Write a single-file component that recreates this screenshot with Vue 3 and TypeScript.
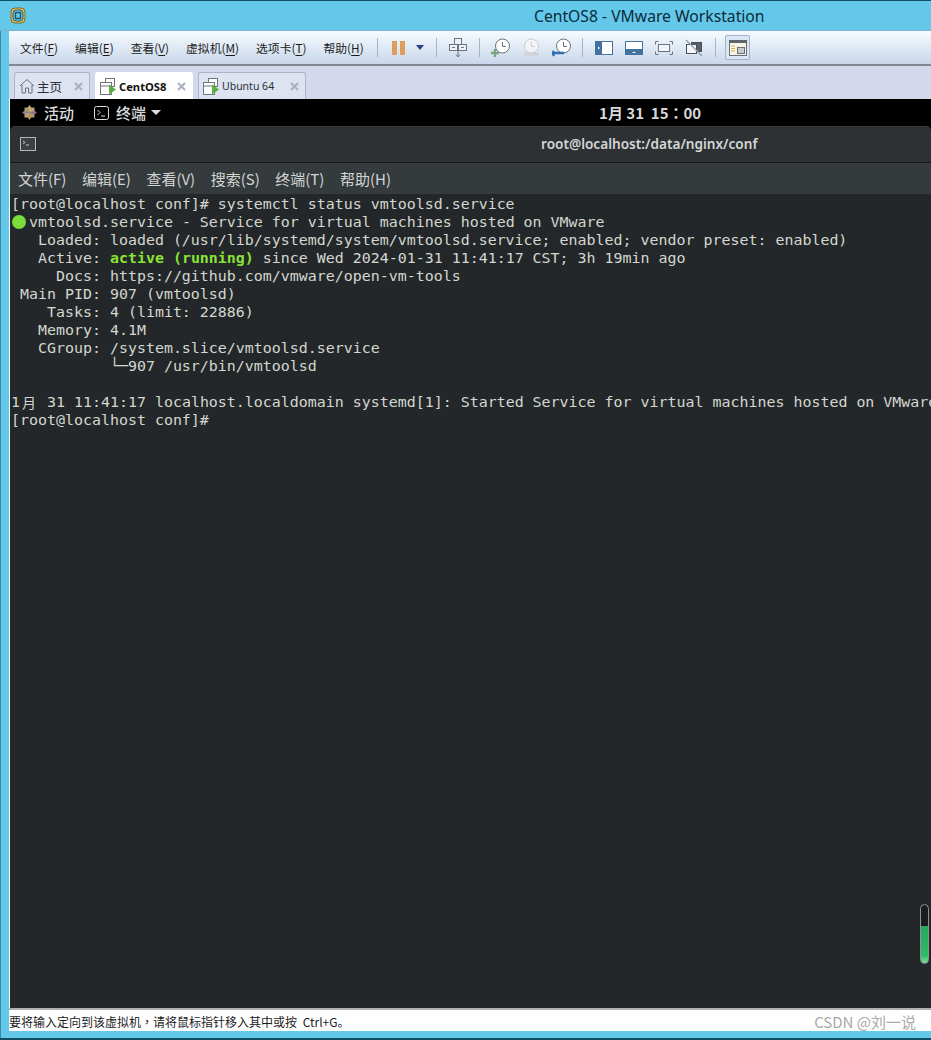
<script setup lang="ts">
interface Menu { label: string; key: string }
const vmMenus: Menu[] = [
  { label: '文件(', key: 'F' },
  { label: '编辑(', key: 'E' },
  { label: '查看(', key: 'V' },
  { label: '虚拟机(', key: 'M' },
  { label: '选项卡(', key: 'T' },
  { label: '帮助(', key: 'H' },
]
const termMenus: string[] = ['文件(F)', '编辑(E)', '查看(V)', '搜索(S)', '终端(T)', '帮助(H)']
</script>

<template>
  <div class="frame">
    <header class="titlebar">
      <svg class="app-icon" width="16" height="17" viewBox="0 0 16 17">
        <rect x="1" y="1" width="14" height="15" rx="4" fill="#f1c24a" stroke="#7d6a2c" />
        <rect x="3" y="3" width="10" height="11" rx="3" fill="#64c8e8" stroke="#2a5d6e" />
        <rect x="5.500" y="5.500" width="5" height="6" fill="none" stroke="#24505e" stroke-width="1.400" />
      </svg>
      <span class="app-title">CentOS8 - VMware Workstation</span>
    </header>

    <div class="body">
      <nav class="toolbar">
        <div class="menus">
          <span v-for="m in vmMenus" :key="m.key" class="vm-menu">{{ m.label }}<u>{{ m.key }}</u>)</span>
        </div>
        <i class="sep sep-first"></i>
        <svg class="tool pause" width="13" height="14" viewBox="0 0 13 14"><rect width="5" height="14" fill="#dd9d5c" /><rect x="8" width="5" height="14" fill="#dd9d5c" /></svg>
        <svg class="tool caret" width="8" height="5" viewBox="0 0 8 5"><path d="M0 0h8L4 5z" fill="#2b3f8a" /></svg>
        <i class="sep sep-a"></i>
        <svg class="tool net" width="18" height="20" viewBox="0 0 18 20" fill="#eef1f6" stroke="#6d7480">
          <rect x="5.500" y=".5" width="7" height="6" /><rect x=".5" y="6.500" width="8" height="6" /><rect x="9.500" y="6.500" width="8" height="6" />
          <path d="M3 9.500h3M12 9.500h3M9 13v5M7 16.500l2 2.500 2-2.500" fill="none" />
        </svg>
        <i class="sep sep-b"></i>
        <svg class="tool clock" width="20" height="20" viewBox="0 0 20 20">
          <circle cx="11.500" cy="8" r="7" fill="#fff" stroke="#69707a" />
          <path d="M11.500 4v4.500h3.500" fill="none" stroke="#69707a" />
          <path d="M4 11v8M0 15h8" stroke="#7aa57e" stroke-width="2.400" />
        </svg>
        <svg class="tool clock dim" width="20" height="20" viewBox="0 0 20 20">
          <circle cx="10.500" cy="8" r="7" fill="#f1f3f7" stroke="#c9cdd3" />
          <path d="M10.500 4v4.500h3.500" fill="none" stroke="#c9cdd3" />
          <path d="M3 16h15" stroke="#cfd2d6" stroke-width="3" />
        </svg>
        <svg class="tool clock" width="20" height="20" viewBox="0 0 20 20">
          <circle cx="11.500" cy="8" r="7" fill="#fff" stroke="#69707a" />
          <path d="M11.500 4v4.500h3.500" fill="none" stroke="#69707a" />
          <path d="M1 15h11M2 13l-1.500 2L2 18" fill="none" stroke="#2f6fb0" stroke-width="2.400" />
        </svg>
        <i class="sep sep-c"></i>
        <svg class="tool view" width="18" height="14" viewBox="0 0 18 14"><rect width="18" height="14" fill="#44729f" /><rect x="7" y="1" width="10" height="12" fill="#fff" /><path d="M3 5.500 5 7 3 8.500z" fill="#fff" /></svg>
        <svg class="tool view" width="18" height="14" viewBox="0 0 18 14"><rect width="18" height="14" fill="#44729f" /><rect x="1" y="1" width="16" height="7" fill="#fff" /><path d="M7 12l2-1.500 2 1.500z" fill="#fff" /></svg>
        <svg class="tool view" width="18" height="14" viewBox="0 0 18 14" fill="none" stroke="#6d7480">
          <rect x="3.500" y="3.500" width="11" height="7" fill="#f4f6fa" />
          <path d="M.5 3.500v-3h3M14.500.5h3v3M.5 10.500v3h3M14.500 13.500h3v-3" />
        </svg>
        <svg class="tool view" width="18" height="18" viewBox="0 0 18 18" fill="none">
          <rect x="6.500" y="3.500" width="10" height="9" fill="#59606a" stroke="#4a4f57" />
          <rect x="1.500" y="5.500" width="10" height="9" fill="#f4f6fa" stroke="#4a4f57" />
          <path d="M1 1l16 16" stroke="#9aa0a8" stroke-width="1.500" />
        </svg>
        <i class="sep sep-d"></i>
        <button class="lib-btn" type="button" aria-label="库">
          <svg width="18" height="16" viewBox="0 0 18 16">
            <rect x=".5" y=".5" width="17" height="15" fill="#f7f3e6" stroke="#6b7076" />
            <rect x="0" y="0" width="18" height="3" fill="#5f6468" />
            <path d="M2 6h4M2 8.500h4M2 11h4" stroke="#d9b657" />
            <rect x="8.500" y="7.500" width="7" height="6" fill="#c6ccd2" stroke="#6b7076" />
          </svg>
        </button>
      </nav>

      <div class="tabs">
        <div class="tab tab-home">
          <svg width="16" height="16" viewBox="0 0 16 16" fill="none" stroke="#6a7078"><path d="M1 8l7-6.500L15 8M3 7v8h3.500v-5h3v5H13V7" /></svg>
          <span class="tab-label zh">主页</span>
          <svg class="x" width="9" height="9" viewBox="0 0 9 9"><path d="M1 1l7 7M8 1l-7 7" /></svg>
        </div>
        <div class="tab tab-active">
          <svg width="17" height="17" viewBox="0 0 17 17" fill="#fff" stroke="#6f757c"><rect x="5.500" y=".5" width="9" height="8" /><rect x=".5" y="4.500" width="11" height="12" /><path d="M.5 8h11" /><path d="M9 6.500 16 11.500 9 16.500z" fill="#5eae45" stroke="none" /></svg>
          <span class="tab-label bold">CentOS8</span>
          <svg class="x" width="9" height="9" viewBox="0 0 9 9"><path d="M1 1l7 7M8 1l-7 7" /></svg>
        </div>
        <div class="tab tab-ubuntu">
          <svg width="17" height="17" viewBox="0 0 17 17" fill="#fff" stroke="#6f757c"><rect x="5.500" y=".5" width="9" height="8" /><rect x=".5" y="4.500" width="11" height="12" /><path d="M.5 8h11" /><path d="M9 6.500 16 11.500 9 16.500z" fill="#5eae45" stroke="none" /></svg>
          <span class="tab-label">Ubuntu 64</span>
          <svg class="x" width="9" height="9" viewBox="0 0 9 9"><path d="M1 1l7 7M8 1l-7 7" /></svg>
        </div>
      </div>

      <main class="vm">
        <div class="gnome-bar">
          <svg class="gnome-logo" width="15" height="15" viewBox="0 0 15 15">
            <path d="M7.500 0 10 3.500 7.500 7.500 5 3.500z" fill="#c9a86a" />
            <path d="M15 7.500 11.500 10 7.500 7.500 11.500 5z" fill="#8f6f95" />
            <path d="M7.500 15 5 11.500 7.500 7.500 10 11.500z" fill="#b58f5c" />
            <path d="M0 7.500 3.500 5 7.500 7.500 3.500 10z" fill="#9a7aa0" />
            <path d="M2.500 2.500h3.500l1.500 5-5-1.500zM12.500 12.500H9l-1.500-5 5 1.500z" fill="#a89a70" />
            <path d="M12.500 2.500V6l-5 1.500L9 2.500zM2.500 12.500V9l5-1.500L6 12.500z" fill="#bca27a" />
          </svg>
          <span class="gnome-item activities">活动</span>
          <svg class="term-icon" width="15" height="14" viewBox="0 0 15 14" fill="none" stroke="#ddd"><rect x=".5" y=".5" width="14" height="13" rx="2" /><path d="M3.500 4l2.500 2.500L3.500 9M7 10h4" /></svg>
          <span class="gnome-item term-label">终端</span>
          <svg class="term-caret" width="10" height="5" viewBox="0 0 10 5"><path d="M0 0h10L5 5z" fill="#ddd" /></svg>
          <span class="clock-text">1月 31&nbsp; 15<span class="tc">：</span>00</span>
        </div>

        <section class="term-window">
          <div class="term-title">
            <svg class="term-win-icon" width="16" height="14" viewBox="0 0 16 14" fill="none"><rect x=".5" y=".5" width="15" height="13" fill="#3b4042" stroke="#b5b8b9" /><path d="M3 4l2 1.500L3 7M6 8h3" stroke="#c8caca" /></svg>
            <span class="term-path">root@localhost:/data/nginx/conf</span>
          </div>
          <div class="term-menu">
            <span v-for="m in termMenus" :key="m">{{ m }}</span>
          </div>
          <div class="console">
<pre class="lines">[root@localhost conf]# systemctl status vmtoolsd.service
<span class="dot"></span>vmtoolsd.service - Service for virtual machines hosted on VMware
   Loaded: loaded (/usr/lib/systemd/system/vmtoolsd.service; enabled; vendor preset: enabled)
   Active: <b class="ok">active (running)</b> since Wed 2024-01-31 11:41:17 CST; 3h 19min ago
     Docs: https://github.com/vmware/open-vm-tools
 Main PID: 907 (vmtoolsd)
    Tasks: 4 (limit: 22886)
   Memory: 4.1M
   CGroup: /system.slice/vmtoolsd.service
           └─907 /usr/bin/vmtoolsd

1<span class="wide">月</span> 31 11:41:17 localhost.localdomain systemd[1]: Started Service for virtual machines hosted on VMware Tools.
[root@localhost conf]#</pre>
            <div class="gauge"><div class="gauge-fill"></div></div>
          </div>
        </section>
      </main>

      <footer class="status">
        <span class="hint">要将输入定向到该虚拟机<span class="tc">，</span>请将鼠标指针移入其中或按 Ctrl+G。</span>
        <span class="mark">CSDN @刘一说</span>
      </footer>
    </div>
  </div>
</template>

<style>
html, body { margin: 0; background: #63c8e9; overflow: hidden; }
</style>

<style scoped>
.frame {
  width: 931px;
  height: 1040px;
  display: flex;
  flex-direction: column;
  overflow: hidden;
  background: #63c8e9;
  font-family: "Noto Sans CJK SC", "Noto Sans", sans-serif;
  box-shadow: inset 1px 0 0 #3e8aa5;
  border-bottom: 2px solid #0f4f63;
  box-sizing: border-box;
}
.tc { font-family: "Noto Sans CJK TC", sans-serif; }
.titlebar {
  flex: 0 0 31px;
  display: flex;
  align-items: center;
  padding-left: 10px;
  border-top: 1px solid #0f4f63;
  border-bottom: 1px solid #7fb2cf;
  box-sizing: border-box;
  background: #63c8e9;
}
.app-title {
  margin-left: 508px;
  font: 15.700px "Noto Sans", "Open Sans", sans-serif;
  color: #0d2b3a;
  white-space: nowrap;
}
.body {
  flex: 1;
  display: flex;
  flex-direction: column;
  margin-left: 9px;
  margin-bottom: 7px;
  min-height: 0;
  background: #fff;
}
.toolbar {
  flex: 0 0 35px;
  box-sizing: border-box;
  display: flex;
  align-items: center;
  background: linear-gradient(#f6fbff, #c9d7ea);
  border-bottom: 2px solid #7e8994;
  padding-left: 11px;
}
.menus { display: flex; gap: 17px; width: 347px; flex: none; }
.vm-menu { font-size: 11.800px; color: #1c1c1c; white-space: nowrap; }
.vm-menu u { text-underline-offset: 2px; }
.sep { width: 1px; height: 19px; background: #a9b4c2; flex: none; }
.sep-first { margin-left: 10px; }
.tool { flex: none; display: block; }
.pause { margin-left: 14px; }
.caret { margin-left: 11px; }
.sep-a { margin-left: 12px; }
.net { margin-left: 12px; }
.sep-b { margin-left: 12px; }
.clock { margin-left: 11px; }
.clock.dim { margin-left: 10px; }
.sep-c { margin-left: 10px; }
.view { margin-left: 12px; }
.sep-d { margin-left: 12px; }
.lib-btn {
  margin-left: 9px;
  width: 25px;
  height: 25px;
  padding: 0;
  display: grid;
  place-items: center;
  background: #dbe6f4;
  border: 1px solid #9fb3cc;
  border-radius: 2px;
}
.tabs {
  flex: 0 0 33px;
  box-sizing: border-box;
  display: flex;
  align-items: flex-end;
  gap: 5px;
  padding-left: 5px;
  background: #d3d8ec;
}
.tab {
  height: 27px;
  box-sizing: border-box;
  display: flex;
  align-items: center;
  padding: 0 6px 0 4px;
  background: #dde3f0;
  border: 1px solid #aab6c8;
  border-bottom: 0;
  border-radius: 3px 3px 0 0;
  font: 12px "Noto Sans", sans-serif;
  color: #2b2f36;
}
.tab-home { width: 76px; }
.tab-active { width: 98px; background: #fff; border-color: #fff; }
.tab-ubuntu { width: 108px; }
.tab-label { margin-left: 2px; white-space: nowrap; }
.tab-label.zh { font: 12.500px "Noto Sans CJK SC", sans-serif; }
.tab-label.bold { font-weight: 700; font-size: 11.200px; color: #111; }
.tab-ubuntu .tab-label { font-size: 10.500px; }
.x { margin-left: auto; stroke: #a5b0c0; stroke-width: 2; fill: none; }
.vm {
  flex: 1;
  min-height: 0;
  display: flex;
  flex-direction: column;
  margin-left: 1px;
  background: #000;
}
.gnome-bar {
  flex: 0 0 27px;
  display: flex;
  align-items: center;
  padding-left: 12px;
  color: #dcdcdc;
  font-size: 15px;
  font-weight: 500;
}
.activities { margin-left: 7px; }
.term-icon { margin-left: 20px; }
.term-label { margin-left: 7px; }
.term-caret { margin-left: 5px; }
.clock-text {
  margin-left: 438px;
  font: 700 15px "Noto Sans CJK SC", sans-serif;
  white-space: nowrap;
  color: #d8d8d8;
}
.term-window {
  flex: 1;
  min-height: 0;
  display: flex;
  flex-direction: column;
  background: #232729;
  border-radius: 5px 5px 0 0;
  overflow: hidden;
}
.term-title {
  flex: 0 0 37px;
  box-sizing: border-box;
  display: flex;
  align-items: center;
  background: #2d3133;
  border-top: 1px solid #3b3d3d;
  border-bottom: 1px solid #16191a;
  padding: 0 0 2px 10px;
  color: #d4d6d6;
}
.term-path {
  margin-left: 505px;
  font: 600 13.600px "Noto Sans", sans-serif;
  white-space: nowrap;
}
.term-menu {
  flex: 0 0 31px;
  display: flex;
  align-items: center;
  gap: 15.500px;
  padding-left: 8px;
  background: #353a3c;
  color: #d2d4d4;
  font: 15px "Noto Sans CJK SC", sans-serif;
  white-space: nowrap;
}
.console {
  flex: 1;
  min-height: 0;
  position: relative;
  overflow: hidden;
}
.lines {
  margin: 0;
  padding: 1px 0 0 1px;
  font: 14.950px/18px "DejaVu Sans Mono", "Noto Sans CJK SC", monospace;
  color: #d3d7cf;
  white-space: pre;
}
.ok { color: #8ae234; font-weight: 700; }
.dot {
  display: inline-block;
  width: 14px;
  height: 14px;
  margin: 0 3px 0 1px;
  border-radius: 50%;
  background: #7bdc3c;
  vertical-align: -2px;
}
.wide {
  display: inline-block;
  width: 18px;
  height: 18px;
  line-height: 18px;
  font-size: 14px;
  font-family: "Noto Sans CJK SC", sans-serif;
  text-align: center;
  vertical-align: top;
}
.gauge {
  position: absolute;
  left: 910px;
  top: 710px;
  width: 9px;
  height: 60px;
  box-sizing: border-box;
  border: 1px solid #8f9394;
  border-radius: 5px;
  background: #1a1c1d;
  overflow: hidden;
  display: flex;
  align-items: flex-end;
}
.gauge-fill {
  width: 100%;
  height: 37px;
  background: linear-gradient(#27a85c, #2fbb68 80%, #7fe09a);
}
.status {
  flex: 0 0 23px;
  box-sizing: border-box;
  display: flex;
  align-items: center;
  justify-content: space-between;
  padding: 2px 15px 0 0;
  border-top: 2px solid #b0b0b0;
  font-size: 12px;
  color: #1c1c1c;
  background: #fff;
  white-space: nowrap;
}
.hint { word-spacing: 3px; }
.mark { font-size: 15px; line-height: 17px; color: #a9a9a9; }
</style>
